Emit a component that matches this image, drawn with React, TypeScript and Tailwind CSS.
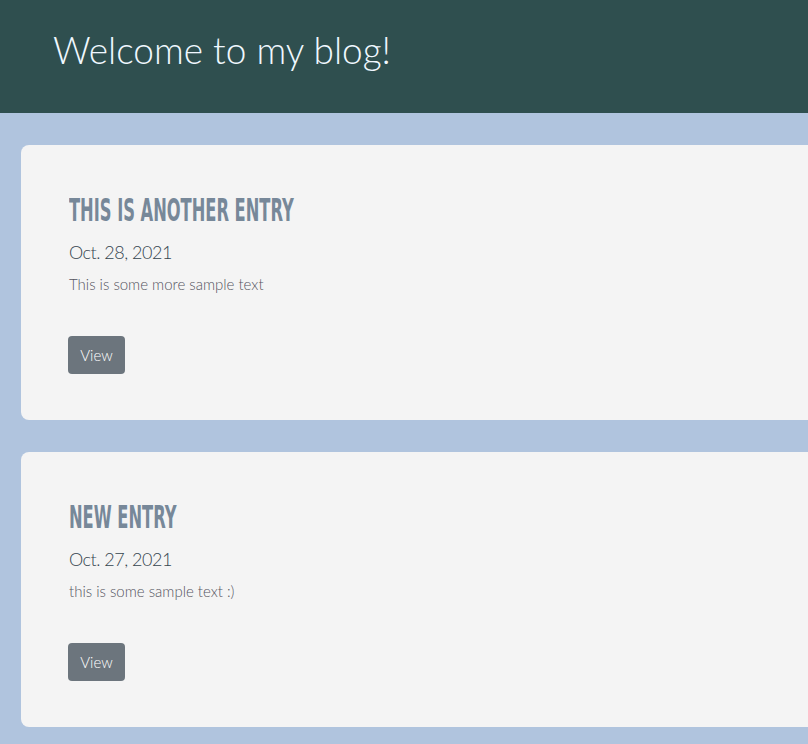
import React from "react";

const entries = [
  { title: "This is another entry", date: "Oct. 28, 2021", text: "This is some more sample text" },
  { title: "New entry", date: "Oct. 27, 2021", text: "this is some sample text :)" },
];

export default function App() {
  return (
    <div className="min-h-[744px] w-[808px] overflow-hidden bg-[#b0c4de]" style={{ fontFamily: "Lato, 'Noto Sans', sans-serif" }}>
      <header className="h-[113px] bg-[#2f4f4f] pl-[53px] pt-[24px]">
        <h1 className="text-[37px] font-light leading-[52px] text-[#f0f8ff]">Welcome to my blog!</h1>
      </header>
      <main className="flex flex-col gap-[32px] pt-[32px] pl-[21px]">
        {entries.map((e) => (
          <div key={e.title} className="h-[275px] w-[900px] rounded-[8px] bg-[#f4f4f4] pl-[48px] pt-[49px]">
            <h2
              className="inline-block origin-left scale-x-[0.565] whitespace-nowrap text-[32px] font-bold uppercase leading-[32px] text-[#778899]"
              style={{ fontFamily: "'DejaVu Sans Condensed', 'DejaVu Sans', sans-serif" }}
            >
              {e.title}
            </h2>
            <div className="mt-[11px] text-[18px] font-light leading-[28px] tracking-[-0.5px] text-[#34454f]">{e.date}</div>
            <p className="mt-[6px] text-[15px] font-light leading-[24px] text-[#55555f]">{e.text}</p>
            <button className="mt-[40px] ml-[-1px] h-[38px] w-[57px] rounded-[4px] bg-[#6c757d] text-[15px] font-light text-white">View</button>
          </div>
        ))}
      </main>
    </div>
  );
}
